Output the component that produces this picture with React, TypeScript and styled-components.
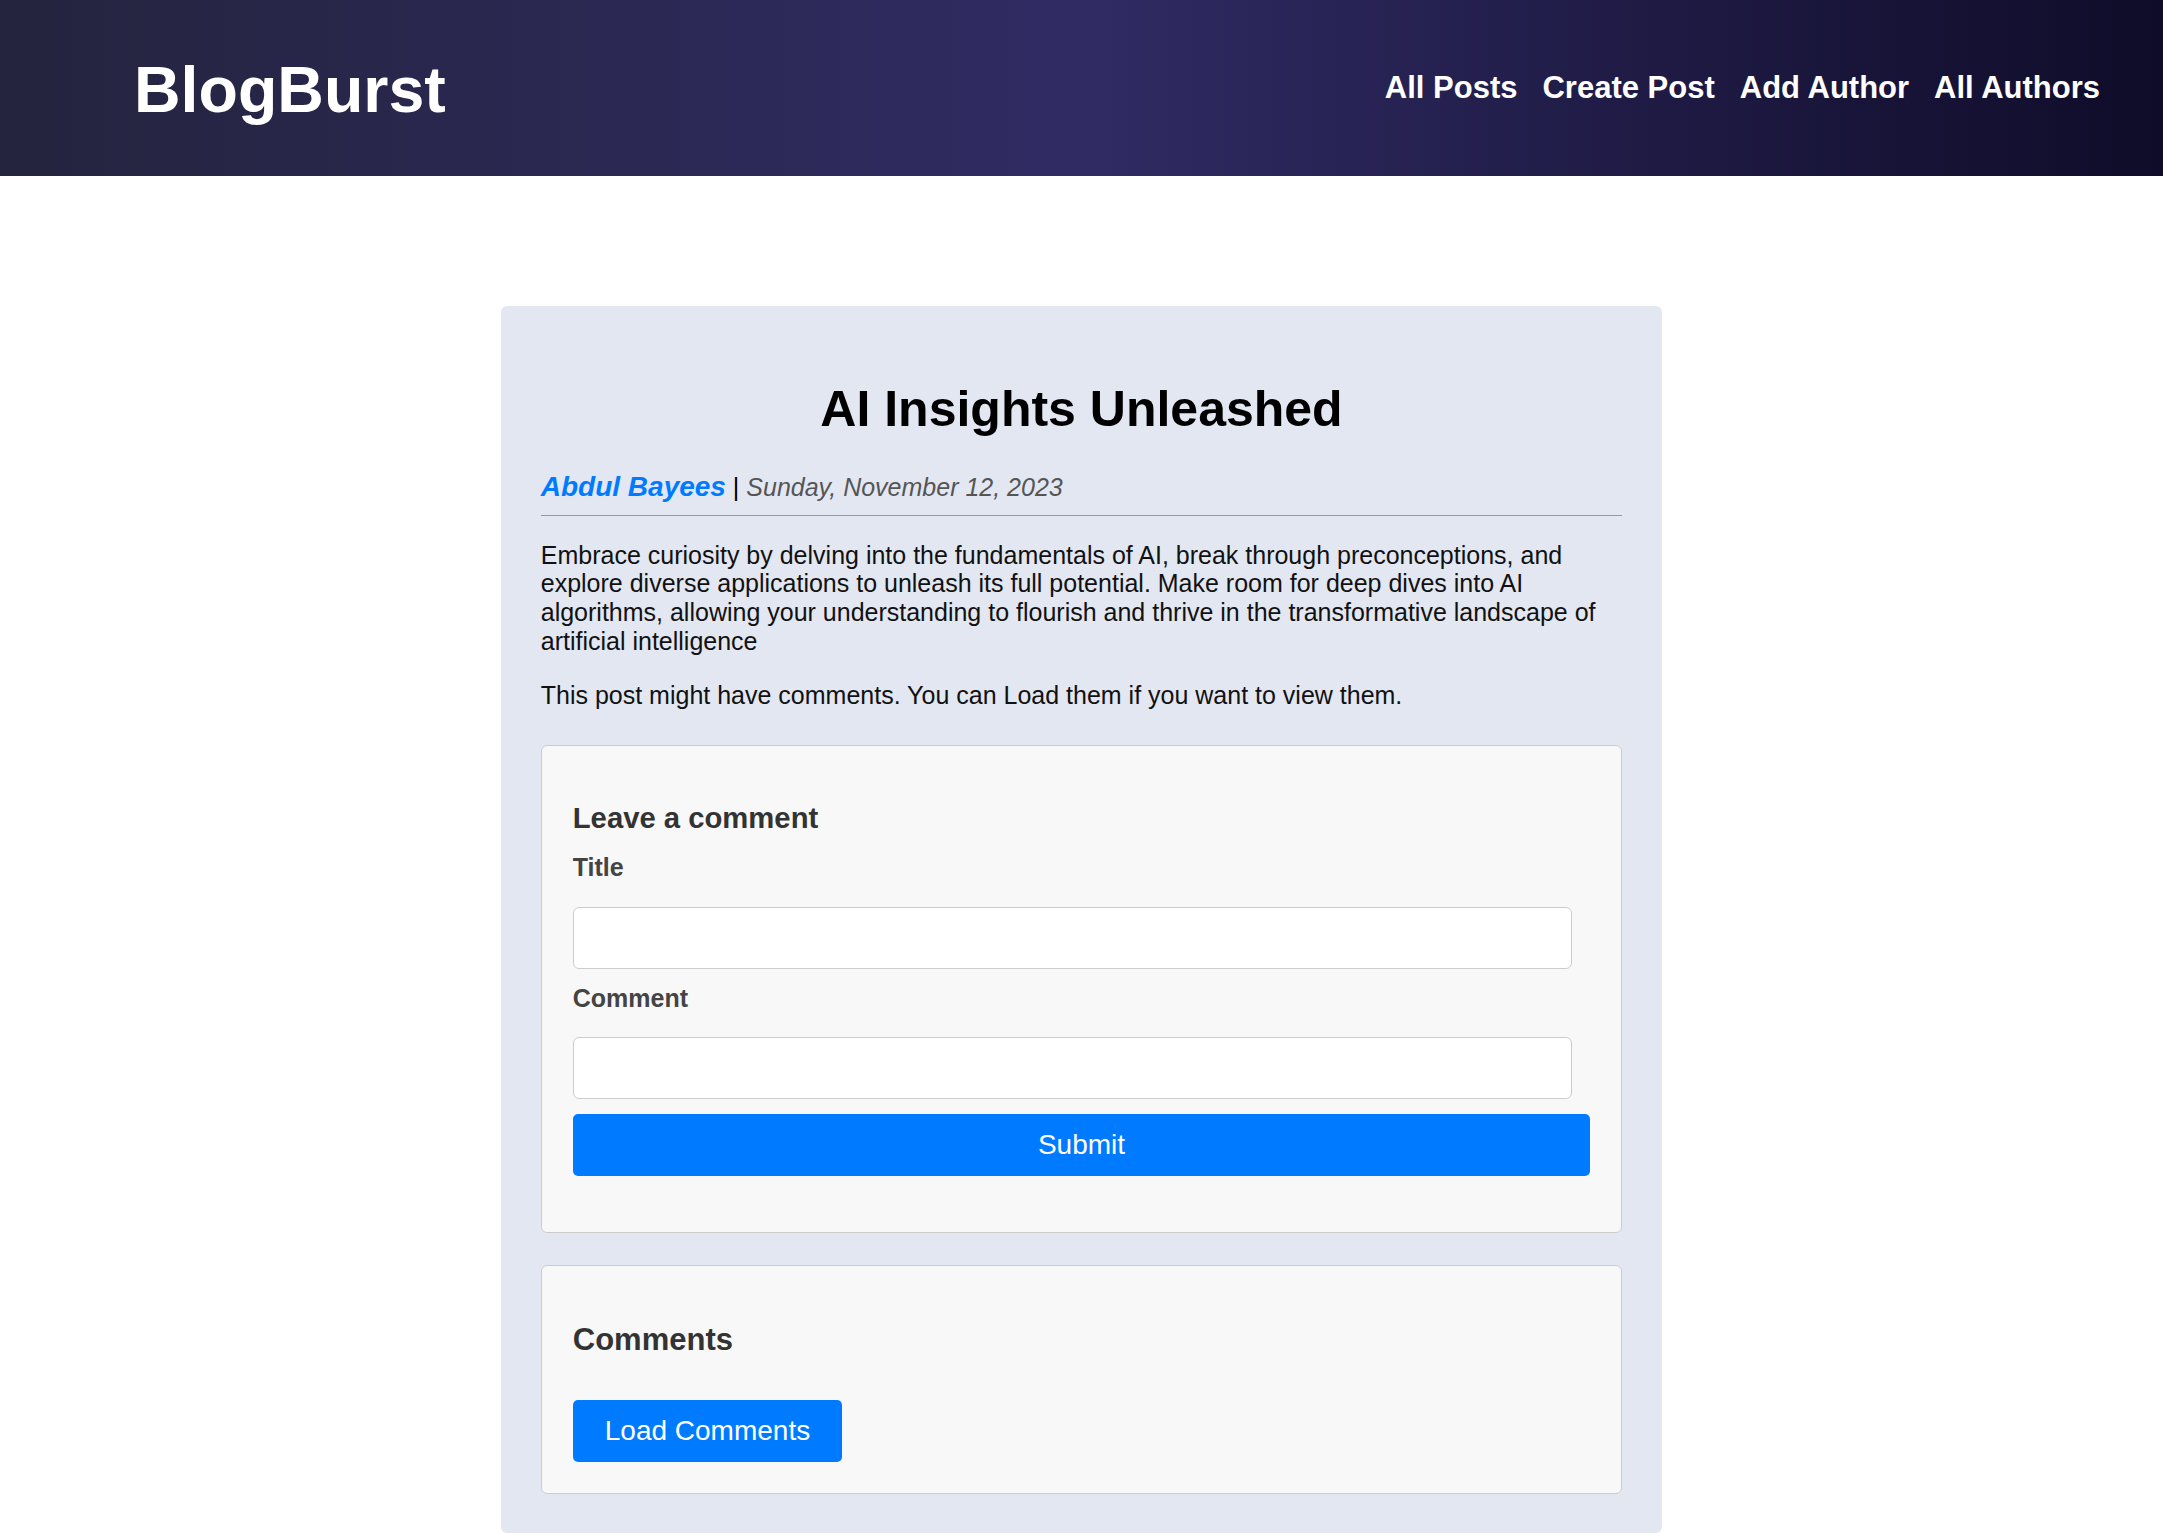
import React from "react";
import styled, { createGlobalStyle } from "styled-components";

const GlobalStyle = createGlobalStyle`
  html, body {
    margin: 0;
    padding: 0;
    background: #ffffff;
    font-family: "Liberation Sans", Arial, Helvetica, sans-serif;
  }
  * { box-sizing: border-box; }
`;

const Header = styled.header`
  height: 176px;
  display: flex;
  align-items: center;
  justify-content: space-between;
  padding: 0 63px 0 134px;
  background: linear-gradient(to right, #24243e, #302b63, #0f0c29);
`;

const Logo = styled.div`
  color: #ffffff;
  font-size: 64.5px;
  font-weight: 700;
  margin-top: 4px;
`;

const Nav = styled.nav`
  display: flex;
  gap: 25px;
`;

const NavLink = styled.a`
  color: #ffffff;
  font-size: 31px;
  font-weight: 700;
  text-decoration: none;
`;

const Main = styled.main`
  padding-top: 130px;
`;

const PostCard = styled.article`
  box-sizing: content-box;
  width: 50%;
  margin: 0 auto;
  padding: 40px 40px 39px;
  background: #e3e7f2;
  border-radius: 6px;
  color: #111;
  font-size: 25px;
`;

const Title = styled.h1`
  margin: 35px 0 32px;
  text-align: center;
  font-size: 50px;
  font-weight: 700;
  color: #000;
  line-height: 1.15;
`;

const Meta = styled.div`
  padding-bottom: 12px;
  border-bottom: 1px solid #999;
  font-size: 25px;
  color: #000;
`;

const Author = styled.span`
  color: #007bff;
  font-weight: 700;
  font-style: italic;
  font-size: 28px;
`;

const DateText = styled.span`
  color: #555;
  font-style: italic;
`;

const Paragraph = styled.p`
  margin: 25px 0 0;
  line-height: 1.15;
`;

const Panel = styled.section<{ $top: number }>`
  margin-top: ${(p) => p.$top}px;
  padding: 31px;
  background: #f8f8f8;
  border: 1px solid #ccc;
  border-radius: 6px;
`;

const PanelHeading = styled.h3<{ $size: number; $bottom: number }>`
  margin: 25px 0 ${(p) => p.$bottom}px;
  font-size: ${(p) => p.$size}px;
  font-weight: 700;
  color: #333;
  line-height: 1.15;
`;

const Form = styled.form`
  display: flex;
  flex-direction: column;
  align-items: flex-start;
`;

const Label = styled.label`
  display: block;
  margin-bottom: 25px;
  font-size: 25px;
  font-weight: 700;
  color: #444;
  line-height: 1.15;
`;

const Input = styled.input`
  width: calc(100% - 18px);
  height: 62px;
  margin-bottom: 15px;
  padding: 0 15px;
  border: 1px solid #ccc;
  border-radius: 6px;
  background: #fff;
  font-family: inherit;
  font-size: 25px;
`;

const Button = styled.button<{ $full?: boolean }>`
  width: ${(p) => (p.$full ? "100%" : "auto")};
  height: 62px;
  padding: 0 32px;
  border: none;
  border-radius: 5px;
  background: #007bff;
  color: #fff;
  font-family: inherit;
  font-size: 28px;
  cursor: pointer;
`;

const SubmitButton = styled(Button)`
  margin-bottom: 25px;
`;

export default function App() {
  return (
    <>
      <GlobalStyle />
      <Header>
        <Logo>BlogBurst</Logo>
        <Nav>
          <NavLink href="#">All Posts</NavLink>
          <NavLink href="#">Create Post</NavLink>
          <NavLink href="#">Add Author</NavLink>
          <NavLink href="#">All Authors</NavLink>
        </Nav>
      </Header>
      <Main>
        <PostCard>
          <Title>AI Insights Unleashed</Title>
          <Meta>
            <Author>Abdul Bayees</Author> | <DateText>Sunday, November 12, 2023</DateText>
          </Meta>
          <Paragraph>
            Embrace curiosity by delving into the fundamentals of AI, break through preconceptions, and
            explore diverse applications to unleash its full potential. Make room for deep dives into AI
            algorithms, allowing your understanding to flourish and thrive in the transformative landscape
            of artificial intelligence
          </Paragraph>
          <Paragraph>This post might have comments. You can Load them if you want to view them.</Paragraph>
          <Panel $top={36}>
            <PanelHeading $size={29.25} $bottom={17}>Leave a comment</PanelHeading>
            <Form onSubmit={(e) => e.preventDefault()}>
              <Label htmlFor="title">Title</Label>
              <Input id="title" type="text" />
              <Label htmlFor="comment">Comment</Label>
              <Input id="comment" type="text" />
              <SubmitButton $full type="submit">Submit</SubmitButton>
            </Form>
          </Panel>
          <Panel $top={32}>
            <PanelHeading $size={31} $bottom={42}>Comments</PanelHeading>
            <Button type="button">Load Comments</Button>
          </Panel>
        </PostCard>
      </Main>
    </>
  );
}
